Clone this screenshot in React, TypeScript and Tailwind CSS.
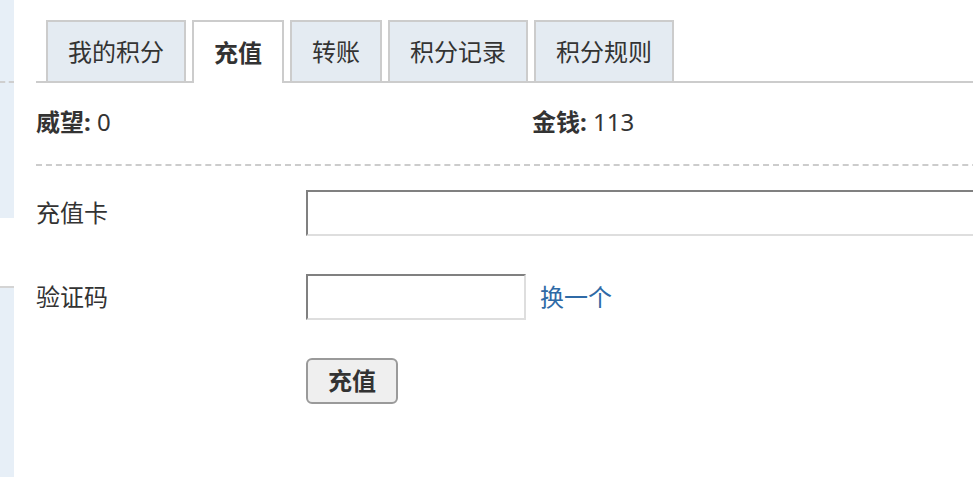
const tabs = ['我的积分', '充值', '转账', '积分记录', '积分规则'];

const FONT = 'font-["Noto_Sans","Noto_Sans_CJK_SC",sans-serif]';

export default function App() {
  const active = 1;

  return (
    <div className={`flex h-[477px] w-[973px] overflow-hidden bg-white text-[24px] text-[#333] ${FONT}`}>
      {/* side column */}
      <div className="flex w-[14px] shrink-0 flex-col">
        <div className="h-[218px] bg-[#e7eff7] pt-[81px]">
          <div className="border-t-2 border-dashed border-[#cfcfcf]" />
        </div>
        <div className="h-[68px] bg-white" />
        <div className="flex-1 border-t-2 border-[#d4d4d4] bg-[#e7eff7]" />
      </div>

      {/* main */}
      <div className="ml-[22px] w-[992px] shrink-0">
        <ul className="mt-[20px] flex gap-[6px] border-b-2 border-[#cccccc] pl-[10px]">
          {tabs.map((t, i) =>
            i === active ? (
              <li
                key={t}
                className="relative -mb-[2px] flex h-[63px] items-center border-2 border-b-0 border-[#cccccc] bg-white px-[20px] font-bold leading-none"
              >
                {t}
              </li>
            ) : (
              <li
                key={t}
                className="flex h-[61px] items-center border-2 border-b-0 border-[#cccccc] bg-[#e4ebf2] px-[20px] leading-none"
              >
                {t}
              </li>
            ),
          )}
        </ul>

        <div className="flex border-b-2 border-dashed border-[#cccccc] pt-[23px] pb-[26px] leading-[32px]">
          <div className="w-[496px]">
            <b>威望:</b> 0
          </div>
          <div>
            <b>金钱:</b> 113
          </div>
        </div>

        <form className="flex flex-col gap-[38px] pt-[24px]">
          <div className="flex items-center">
            <label className="w-[270px] leading-[32px]">充值卡</label>
            <input
              type="text"
              className="h-[46px] w-[700px] border-2 border-t-[#808080] border-l-[#808080] border-r-[#dedede] border-b-[#dedede] bg-white px-2 outline-none"
            />
          </div>
          <div className="flex items-center">
            <label className="w-[270px] leading-[32px]">验证码</label>
            <input
              type="text"
              className="h-[46px] w-[220px] border-2 border-t-[#808080] border-l-[#808080] border-r-[#dedede] border-b-[#dedede] bg-white px-2 outline-none"
            />
            <a href="#" className="ml-[14px] leading-[32px] text-[#2f6aa6]">
              换一个
            </a>
          </div>
          <div className="flex">
            <div className="w-[270px]" />
            <button
              type="button"
              className="h-[46px] w-[92px] rounded-[6px] border-2 border-[#9a9a9a] bg-[#efefef] text-[24px] font-bold leading-none text-[#333]"
            >
              充值
            </button>
          </div>
        </form>
      </div>
    </div>
  );
}
